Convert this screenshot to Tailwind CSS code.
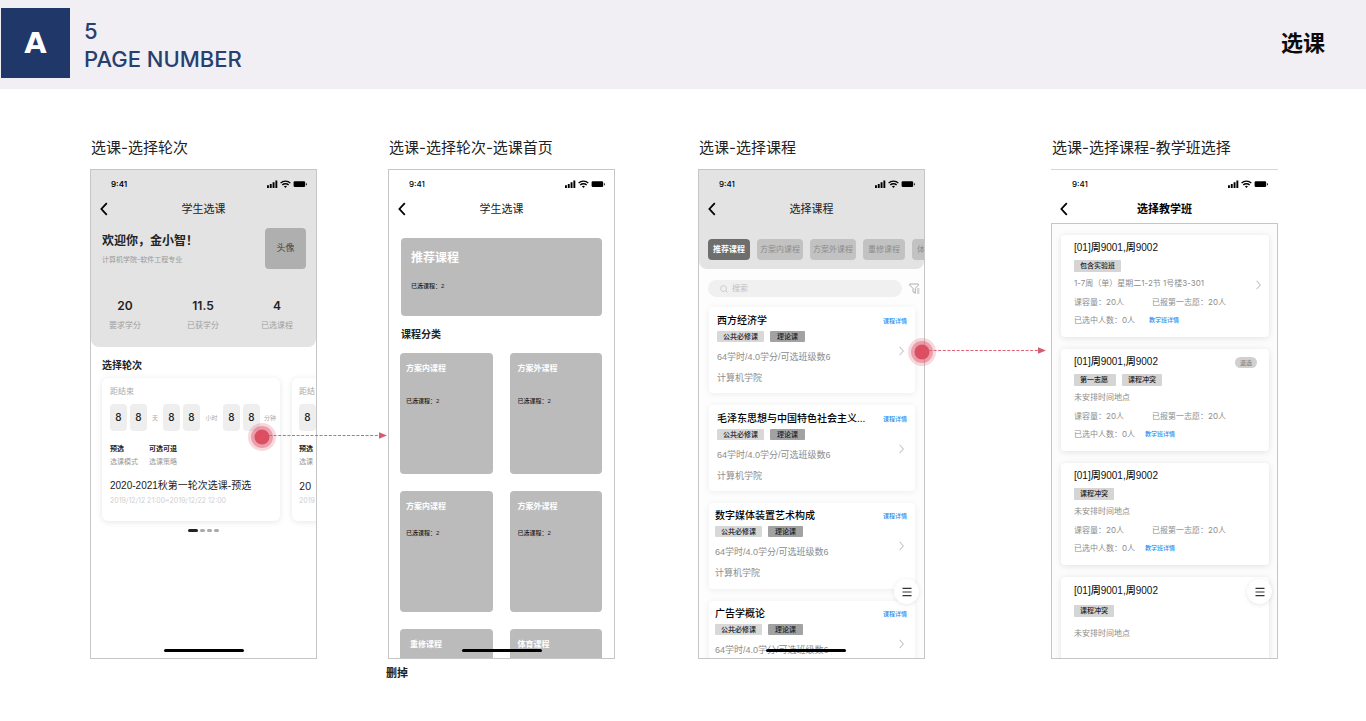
<!DOCTYPE html>
<html lang="zh-CN">
<head>
<meta charset="utf-8">
<meta name="viewport" content="width=device-width, initial-scale=1">
<title>选课</title>
<script src="https://cdn.jsdelivr.net/npm/@tailwindcss/browser@4"></script>
</head>
<body class="min-h-screen bg-white font-['Liberation_Sans','Noto_Sans_CJK_SC',sans-serif] text-[#222]">

<svg class="hidden" aria-hidden="true">
  <symbol id="status" viewBox="0 0 40 8">
    <path d="M0 5.2h1.9V8H0zM2.8 3.9h1.9V8H2.8zM5.6 2.2h1.9V8H5.6zM8.4.4h1.9V8H8.4z"/>
    <path d="M13.6 3.1C16 .4 20.9.4 23.3 3.1M15.3 5c1.6-1.7 4.7-1.7 6.3 0" fill="none" stroke="currentColor" stroke-width="1.4"/>
    <path d="M18.45 8l-1.5-1.7q1.5-1.2 3 0z"/>
    <rect x="26.6" y="1.3" width="11.6" height="5.8" rx="1.3"/>
    <path d="M39 3v2.4q.9-.3.9-1.2T39 3z"/>
  </symbol>
  <symbol id="back" viewBox="0 0 8 14"><path d="M6.8 1.2L1.4 7l5.4 5.8" fill="none" stroke="currentColor" stroke-width="1.8"/></symbol>
  <symbol id="next" viewBox="0 0 5 10"><path d="M.6.8L4.4 5 .6 9.2" fill="none" stroke="currentColor" stroke-width=".9"/></symbol>
  <symbol id="menu" viewBox="0 0 10 10"><path d="M.5 1.4h9M.5 5h9M.5 8.6h9" stroke="currentColor" stroke-width="1.2"/></symbol>
  <symbol id="search" viewBox="0 0 9 9"><circle cx="4" cy="4" r="3.3" fill="none" stroke="currentColor" stroke-width=".8"/><path d="M6.3 6.3L8.5 8.5" stroke="currentColor" stroke-width=".8"/></symbol>
  <symbol id="filter" viewBox="0 0 11 11"><path d="M.8 1h8.6v1.2L6.3 5.4v4.9L4 8.8V5.4L.8 2.2zM8 6h2.4M8 8h2.4M8 10h2.4" fill="none" stroke="currentColor" stroke-width=".8"/></symbol>
</svg>

<header class="flex h-[89px] items-start bg-[#f1eff3] pr-[41px] pl-px">
  <div class="mt-2 flex h-[70px] w-[69px] items-center justify-center bg-[#1f3869] pt-0.5 font-['DejaVu_Sans'] text-[29px] font-bold text-white">A</div>
  <div class="mt-[17px] ml-3.5 flex-1 font-[Inter] text-[22px] leading-7 font-medium text-[#26406f]">
    <p>5</p>
    <p>PAGE NUMBER</p>
  </div>
  <h1 class="mt-7 text-[22px] leading-8 font-bold text-[#0c0c0c]">选课</h1>
</header>

<main class="grid grid-cols-[90fr_227fr_71fr_227fr_83fr_227fr_126fr_227fr_88fr] pt-[47px]">

  <!-- Round selection -->
  <section class="relative col-start-2 min-w-0">
    <h2 class="h-[33px] pl-px font-[Inter,'Noto_Sans_CJK_SC',sans-serif] text-[15px] leading-6 whitespace-nowrap">选课-选择轮次</h2>
    <div class="relative h-[490px] overflow-hidden border border-[#c6c6c6] bg-white">
      <div class="rounded-b-lg bg-[#e3e3e3] pb-[15px]">
        <div class="flex h-7 items-center justify-between pr-[9px] pl-5 text-black">
          <span class="font-[Inter] text-[8px] font-semibold">9:41</span>
          <svg class="h-2 w-10 fill-current"><use href="#status"/></svg>
        </div>
        <nav class="grid h-[22px] grid-cols-[1fr_auto_1fr] items-center px-[9px]">
          <button type="button" aria-label="返回" class="w-3 text-black"><svg class="h-3.5 w-2"><use href="#back"/></svg></button>
          <h3 class="text-[11px] leading-4">学生选课</h3>
        </nav>
        <div class="mt-2 flex justify-between pr-2.5 pl-[11px]">
          <div class="pt-[3px]">
            <p class="text-[12px] leading-5 font-bold">欢迎你，金小智！</p>
            <p class="mt-[3px] font-[Inter,'Noto_Sans_CJK_SC',sans-serif] text-[7px] leading-3 text-[#999]">计算机学院-软件工程专业</p>
          </div>
          <div class="flex size-[41px] items-center justify-center rounded bg-[#afafaf] text-[9px] text-[#444]">头像</div>
        </div>
        <dl class="mt-[29px] flex justify-between pr-[23px] pl-[18px] text-center">
          <div class="flex flex-col-reverse gap-1.5"><dt class="text-[8px] leading-3 text-[#a0a0a0]">要求学分</dt><dd class="font-[Inter] text-[12px] leading-4 font-semibold">20</dd></div>
          <div class="flex flex-col-reverse gap-1.5 pl-1"><dt class="text-[8px] leading-3 text-[#a0a0a0]">已获学分</dt><dd class="font-[Inter] text-[12px] leading-4 font-semibold">11.5</dd></div>
          <div class="flex flex-col-reverse gap-1.5"><dt class="text-[8px] leading-3 text-[#a0a0a0]">已选课程</dt><dd class="font-[Inter] text-[12px] leading-4 font-semibold">4</dd></div>
        </dl>
      </div>
      <h4 class="mt-3 pl-[11px] text-[10px] leading-[14px] font-bold">选择轮次</h4>
      <div class="mt-[5px] ml-[11px] flex gap-3 whitespace-nowrap">
        <article class="h-[143px] w-[178px] shrink-0 rounded-md bg-white pt-2 pl-2 shadow-[0_1px_6px_rgba(0,0,0,0.1)]">
          <p class="text-[8px] leading-3 text-[#aaa]">距结束</p>
          <div class="mt-1.5 flex items-center gap-[3px] text-center font-[Inter,'Noto_Sans_CJK_SC',sans-serif] text-[10px] leading-[27px] font-medium">
            <span class="w-[17px] rounded-sm bg-[#eee]">8</span><span class="w-[17px] rounded-sm bg-[#eee]">8</span>
            <span class="w-2.5 text-[6px] font-normal text-[#aaa]">天</span>
            <span class="w-[17px] rounded-sm bg-[#eee]">8</span><span class="w-[17px] rounded-sm bg-[#eee]">8</span>
            <span class="w-[17px] text-[6px] font-normal text-[#aaa]">小时</span>
            <span class="w-[17px] rounded-sm bg-[#eee]">8</span><span class="w-[17px] rounded-sm bg-[#eee]">8</span>
            <span class="w-[14px] text-[6px] font-normal text-[#aaa]">分钟</span>
          </div>
          <dl class="mt-[13px] flex text-[7px] leading-[10px]">
            <div class="flex w-[39px] flex-col-reverse gap-[3px]"><dt class="text-[#999]">选课模式</dt><dd class="font-bold">预选</dd></div>
            <div class="flex flex-col-reverse gap-[3px]"><dt class="text-[#999]">选课策略</dt><dd class="font-bold">可选可退</dd></div>
          </dl>
          <p class="mt-3 text-[10px] leading-[14px]">2020-2021秋第一轮次选课-预选</p>
          <p class="mt-[3px] font-[Inter] text-[7px] leading-[10px] text-[#cfcfcf]">2019/12/12 21:00~2019/12/22 12:00</p>
        </article>
        <article class="h-[143px] w-[178px] shrink-0 rounded-md bg-white pt-2 pl-[7px] shadow-[0_1px_6px_rgba(0,0,0,0.1)]">
          <p class="w-4 overflow-hidden text-[8px] leading-3 text-[#aaa]">距结</p>
          <div class="mt-1.5 text-center font-[Inter] text-[10px] leading-[27px] font-medium"><span class="block w-[17px] rounded-sm bg-[#eee]">8</span></div>
          <dl class="mt-[13px] flex flex-col-reverse gap-[3px] text-[7px] leading-[10px]"><dt class="text-[#999]">选课</dt><dd class="font-bold">预选</dd></dl>
          <p class="mt-3 font-[Inter] text-[10px] leading-[14px]">20</p>
          <p class="mt-[3px] w-4 overflow-hidden font-[Inter] text-[7px] leading-[10px] text-[#cfcfcf]">2019</p>
        </article>
      </div>
      <div class="mt-2 flex justify-center gap-0.5">
        <i class="h-[3px] w-2.5 rounded-full bg-[#222]"></i><i class="h-[3px] w-[5px] rounded-full bg-[#aaa]"></i><i class="h-[3px] w-[5px] rounded-full bg-[#aaa]"></i><i class="h-[3px] w-[5px] rounded-full bg-[#aaa]"></i>
      </div>
      <div class="absolute bottom-1.5 left-[73px] h-[3px] w-20 rounded-full bg-black"></div>
    </div>
    <!-- Flow link to the course home -->
    <svg class="absolute top-[285px] left-[157px] z-10 h-[30px] w-[140px]" viewBox="0 0 140 30" fill="#dc4f63">
      <circle cx="15" cy="16" r="14" fill-opacity=".22"/><circle cx="15" cy="16" r="11" fill-opacity=".42"/><circle cx="15" cy="16" r="7.5"/>
      <path d="M22 14.5H132" stroke="#dc6475" stroke-dasharray="3 1.6"/><path d="M132 11.2l8 3.3-8 3.3z" fill="#d65d70"/>
    </svg>
  </section>

  <!-- Course home -->
  <section class="col-start-4 min-w-0">
    <h2 class="h-[33px] pl-px font-[Inter,'Noto_Sans_CJK_SC',sans-serif] text-[15px] leading-6 whitespace-nowrap">选课-选择轮次-选课首页</h2>
    <div class="relative h-[490px] overflow-hidden border border-[#c6c6c6] bg-white">
      <div class="flex h-7 items-center justify-between pr-[9px] pl-5 text-black">
        <span class="font-[Inter] text-[8px] font-medium">9:41</span>
        <svg class="h-2 w-10 fill-current"><use href="#status"/></svg>
      </div>
      <nav class="grid h-[22px] grid-cols-[1fr_auto_1fr] items-center px-[9px]">
        <button type="button" aria-label="返回" class="w-3 text-black"><svg class="h-3.5 w-2"><use href="#back"/></svg></button>
        <h3 class="text-[11px] leading-4">学生选课</h3>
      </nav>
      <article class="mx-3 mt-[18px] h-[78px] rounded bg-[#bbb] pt-3 pl-2.5">
        <h4 class="text-[12px] leading-4 font-bold text-white">推荐课程</h4>
        <p class="mt-[15px] text-[6px] leading-[10px] font-medium">已选课程：2</p>
      </article>
      <h4 class="mt-3 pl-3 text-[10px] leading-[14px] font-bold">课程分类</h4>
      <div class="mt-[11px] mr-3 ml-[11px] grid grid-cols-2 gap-[17px]">
        <article class="h-[121px] rounded bg-[#bbb] pt-2.5 pl-1.5"><h5 class="text-[8px] leading-3 font-bold text-white">方案内课程</h5><p class="mt-[21px] text-[6px] leading-[10px] font-medium">已选课程：2</p></article>
        <article class="h-[121px] rounded bg-[#bbb] pt-2.5 pl-2"><h5 class="text-[8px] leading-3 font-bold text-white">方案外课程</h5><p class="mt-[21px] text-[6px] leading-[10px] font-medium">已选课程：2</p></article>
        <article class="h-[121px] rounded bg-[#bbb] pt-2.5 pl-1.5"><h5 class="text-[8px] leading-3 font-bold text-white">方案内课程</h5><p class="mt-[15px] text-[6px] leading-[10px] font-medium">已选课程：2</p></article>
        <article class="h-[121px] rounded bg-[#bbb] pt-2.5 pl-2"><h5 class="text-[8px] leading-3 font-bold text-white">方案外课程</h5><p class="mt-[15px] text-[6px] leading-[10px] font-medium">已选课程：2</p></article>
        <article class="h-[121px] rounded bg-[#bbb] pt-2.5 pl-2.5"><h5 class="text-[8px] leading-3 font-bold text-white">重修课程</h5></article>
        <article class="h-[121px] rounded bg-[#bbb] pt-2.5 pl-2"><h5 class="text-[8px] leading-3 font-bold text-white">体育课程</h5></article>
      </div>
      <div class="absolute bottom-1.5 left-[73px] h-[3px] w-20 rounded-full bg-black"></div>
    </div>
    <p class="-ml-0.5 pt-1.5 text-[11px] leading-4 font-bold">删掉</p>
  </section>

  <!-- Course list -->
  <section class="relative col-start-6 min-w-0">
    <h2 class="h-[33px] pl-px font-[Inter,'Noto_Sans_CJK_SC',sans-serif] text-[15px] leading-6 whitespace-nowrap">选课-选择课程</h2>
    <div class="relative h-[490px] overflow-hidden border border-[#c6c6c6] bg-[#fdfdfd]">
      <div class="rounded-b-lg bg-[#e3e3e3] pb-[9px]">
        <div class="flex h-7 items-center justify-between pr-[9px] pl-5 text-black">
          <span class="font-[Inter] text-[8px] font-medium">9:41</span>
          <svg class="h-2 w-10 fill-current"><use href="#status"/></svg>
        </div>
        <nav class="grid h-[22px] grid-cols-[1fr_auto_1fr] items-center px-[9px]">
          <button type="button" aria-label="返回" class="w-3 text-black"><svg class="h-3.5 w-2"><use href="#back"/></svg></button>
          <h3 class="text-[11px] leading-4">选择课程</h3>
        </nav>
        <div class="mt-[19px] flex gap-[7px] overflow-hidden pl-[9px] text-[8px] leading-[21px] whitespace-nowrap text-[#8c8c8c]">
          <button type="button" class="w-[42px] shrink-0 rounded-sm bg-[#6e6e6e] font-bold text-white">推荐课程</button>
          <button type="button" class="w-[46px] shrink-0 rounded-sm bg-[#c2c2c2]">方案内课程</button>
          <button type="button" class="w-[46px] shrink-0 rounded-sm bg-[#c2c2c2]">方案外课程</button>
          <button type="button" class="w-[42px] shrink-0 rounded-sm bg-[#c2c2c2]">重修课程</button>
          <button type="button" class="w-[42px] shrink-0 rounded-sm bg-[#c2c2c2]">体育课程</button>
        </div>
      </div>
      <div class="mt-[11px] flex items-center gap-[7px] pr-1 pl-[9px]">
        <label class="flex h-[17px] min-w-0 flex-1 items-center gap-1 rounded-full bg-[#f0f0f0] pl-3 text-[#c0c0c0]">
          <svg class="size-2 shrink-0"><use href="#search"/></svg>
          <input type="search" aria-label="搜索" placeholder="搜索" class="w-full min-w-0 bg-transparent text-[8px] leading-3 outline-none placeholder:text-[#c0c0c0]">
        </label>
        <button type="button" aria-label="筛选" class="text-[#999]"><svg class="block size-[11px]"><use href="#filter"/></svg></button>
      </div>
      <div class="mt-2.5 mr-[9px] ml-2.5 flex flex-col gap-3 whitespace-nowrap">
        <article class="h-[86px] shrink-0 rounded bg-white pt-[7px] pr-2 pl-2 shadow-[0_1px_6px_rgba(0,0,0,0.07)]">
          <div class="flex justify-between leading-[14px]"><h4 class="text-[10px] font-medium text-black">西方经济学</h4><a href="#" class="text-[6px] font-medium text-[#2c8df0]">课程详情</a></div>
          <div class="flex justify-between pr-[3px]">
            <div>
              <p class="mt-[3px] flex gap-1.5 text-[7px] leading-[11px] font-medium"><span class="rounded-[1px] bg-[#d8d8d8] px-1.5">公共必修课</span><span class="rounded-[1px] bg-[#a2a2a2] px-[7px]">理论课</span></p>
              <p class="mt-[9px] text-[9px] leading-3 text-[#8c8c8c]">64学时/4.0学分/可选班级数6</p>
              <p class="mt-[9px] text-[9px] leading-3 text-[#8c8c8c]">计算机学院</p>
            </div>
            <svg class="mt-[18px] h-2.5 w-[5px] text-[#aaa]"><use href="#next"/></svg>
          </div>
        </article>
        <article class="h-[86px] shrink-0 rounded bg-white pt-[7px] pr-2 pl-2 shadow-[0_1px_6px_rgba(0,0,0,0.07)]">
          <div class="flex justify-between leading-[14px]"><h4 class="text-[10px] font-medium text-black">毛泽东思想与中国特色社会主义...</h4><a href="#" class="text-[6px] font-medium text-[#2c8df0]">课程详情</a></div>
          <div class="flex justify-between pr-[3px]">
            <div>
              <p class="mt-[3px] flex gap-1.5 text-[7px] leading-[11px] font-medium"><span class="rounded-[1px] bg-[#d8d8d8] px-1.5">公共必修课</span><span class="rounded-[1px] bg-[#a2a2a2] px-[7px]">理论课</span></p>
              <p class="mt-[9px] text-[9px] leading-3 text-[#8c8c8c]">64学时/4.0学分/可选班级数6</p>
              <p class="mt-[9px] text-[9px] leading-3 text-[#8c8c8c]">计算机学院</p>
            </div>
            <svg class="mt-[18px] h-2.5 w-[5px] text-[#aaa]"><use href="#next"/></svg>
          </div>
        </article>
        <article class="h-[86px] shrink-0 rounded bg-white pt-1.5 pr-2 pl-1.5 shadow-[0_1px_6px_rgba(0,0,0,0.07)]">
          <div class="flex justify-between leading-[14px]"><h4 class="text-[10px] font-medium text-black">数字媒体装置艺术构成</h4><a href="#" class="text-[6px] font-medium text-[#2c8df0]">课程详情</a></div>
          <div class="flex justify-between pr-[3px]">
            <div>
              <p class="mt-[3px] flex gap-1.5 text-[7px] leading-[11px] font-medium"><span class="rounded-[1px] bg-[#d8d8d8] px-1.5">公共必修课</span><span class="rounded-[1px] bg-[#a2a2a2] px-[7px]">理论课</span></p>
              <p class="mt-[9px] text-[9px] leading-3 text-[#8c8c8c]">64学时/4.0学分/可选班级数6</p>
              <p class="mt-[9px] text-[9px] leading-3 text-[#8c8c8c]">计算机学院</p>
            </div>
            <svg class="mt-[18px] h-2.5 w-[5px] text-[#aaa]"><use href="#next"/></svg>
          </div>
        </article>
        <article class="h-[86px] shrink-0 rounded bg-white pt-1.5 pr-2 pl-1.5 shadow-[0_1px_6px_rgba(0,0,0,0.07)]">
          <div class="flex justify-between leading-[14px]"><h4 class="text-[10px] font-medium text-black">广告学概论</h4><a href="#" class="text-[6px] font-medium text-[#2c8df0]">课程详情</a></div>
          <div class="flex justify-between pr-[3px]">
            <div>
              <p class="mt-[3px] flex gap-1.5 text-[7px] leading-[11px] font-medium"><span class="rounded-[1px] bg-[#d8d8d8] px-1.5">公共必修课</span><span class="rounded-[1px] bg-[#a2a2a2] px-[7px]">理论课</span></p>
              <p class="mt-[9px] text-[9px] leading-3 text-[#8c8c8c]">64学时/4.0学分/可选班级数6</p>
            </div>
            <svg class="mt-[18px] h-2.5 w-[5px] text-[#aaa]"><use href="#next"/></svg>
          </div>
        </article>
      </div>
      <button type="button" aria-label="菜单" class="absolute right-[5px] bottom-[54px] flex size-[25px] items-center justify-center rounded-full bg-white text-[#333] shadow-[0_1px_5px_rgba(0,0,0,0.1)]"><svg class="size-2.5"><use href="#menu"/></svg></button>
      <div class="absolute bottom-1.5 left-[67px] h-[3px] w-20 rounded-full bg-black"></div>
    </div>
    <!-- Flow link to the class list -->
    <svg class="absolute top-[200px] left-[208px] z-10 h-[30px] w-[140px]" viewBox="0 0 140 30" fill="#dc4f63">
      <circle cx="16" cy="16" r="14" fill-opacity=".22"/><circle cx="16" cy="16" r="11" fill-opacity=".42"/><circle cx="16" cy="16" r="7.5"/>
      <path d="M23 14.5H132" stroke="#dc6475" stroke-dasharray="3 1.6"/><path d="M132 11.2l8 3.3-8 3.3z" fill="#d65d70"/>
    </svg>
  </section>

  <!-- Class list -->
  <section class="col-start-8 min-w-0">
    <h2 class="h-[33px] pl-px font-[Inter,'Noto_Sans_CJK_SC',sans-serif] text-[15px] leading-6 whitespace-nowrap">选课-选择课程-教学班选择</h2>
    <div class="h-[54px] border-t border-[#d6d6d6] bg-white">
      <div class="flex h-7 items-center justify-between pr-2.5 pl-[21px] text-black">
        <span class="font-[Inter] text-[8px] font-medium">9:41</span>
        <svg class="h-2 w-10 fill-current"><use href="#status"/></svg>
      </div>
      <nav class="grid h-[22px] grid-cols-[1fr_auto_1fr] items-center px-[9px]">
        <button type="button" aria-label="返回" class="w-3 text-black"><svg class="h-3.5 w-2"><use href="#back"/></svg></button>
        <h3 class="text-[11px] leading-4 font-bold text-black">选择教学班</h3>
      </nav>
    </div>
    <div class="relative h-[436px] overflow-hidden border border-[#c6c6c6] bg-[#fcfcfc] pt-[11px] pr-2 pl-[9px] font-[Inter,'Noto_Sans_CJK_SC',sans-serif] text-[8px] leading-3 whitespace-nowrap text-[#8c8c8c]">
      <div class="flex flex-col gap-3">
        <article class="h-[102px] shrink-0 rounded bg-white pt-1.5 pr-2 pl-[13px] shadow-[0_1px_6px_rgba(0,0,0,0.11)]">
          <h4 class="font-['Liberation_Sans','Noto_Sans_CJK_SC',sans-serif] text-[10px] leading-[14px] font-medium text-[#111]">[01]周9001,周9002</h4>
          <p class="mt-[5px] flex gap-1.5 text-[7px] font-medium text-[#222]"><span class="rounded-[1px] bg-[#d5d5d5] px-1.5">包含实验班</span></p>
          <p class="mt-[5px] flex justify-between"><span>1-7周（单）星期二1-2节 1号楼3-301</span><svg class="mt-[3px] h-2.5 w-[5px] text-[#aaa]"><use href="#next"/></svg></p>
          <p class="mt-1.5 flex"><span class="w-[78px]">课容量：20人</span><span>已报第一志愿：20人</span></p>
          <p class="mt-1.5 flex gap-3.5"><span>已选中人数：0人</span><a href="#" class="text-[6px] font-medium text-[#2c8df0]">教学班详情</a></p>
        </article>
        <article class="h-[102px] shrink-0 rounded bg-white pt-1.5 pr-3 pl-[13px] shadow-[0_1px_6px_rgba(0,0,0,0.11)]">
          <div class="flex items-center justify-between"><h4 class="font-['Liberation_Sans','Noto_Sans_CJK_SC',sans-serif] text-[10px] leading-[14px] font-medium text-[#111]">[01]周9001,周9002</h4><span class="rounded-full bg-[#d0d0d0] px-[5px] text-[6px] leading-[11px] text-[#777]">退选</span></div>
          <p class="mt-[5px] flex gap-1.5 text-[7px] font-medium text-[#222]"><span class="rounded-[1px] bg-[#d5d5d5] pr-2 pl-1.5">第一志愿</span><span class="rounded-[1px] bg-[#d5d5d5] px-1.5">课程冲突</span></p>
          <p class="mt-[5px]">未安排时间地点</p>
          <p class="mt-[7px] flex"><span class="w-[78px]">课容量：20人</span><span>已报第一志愿：20人</span></p>
          <p class="mt-1.5 flex gap-2.5"><span>已选中人数：0人</span><a href="#" class="text-[6px] font-medium text-[#2c8df0]">教学班详情</a></p>
        </article>
        <article class="h-[102px] shrink-0 rounded bg-white pt-1.5 pr-3 pl-[13px] shadow-[0_1px_6px_rgba(0,0,0,0.11)]">
          <h4 class="font-['Liberation_Sans','Noto_Sans_CJK_SC',sans-serif] text-[10px] leading-[14px] font-medium text-[#111]">[01]周9001,周9002</h4>
          <p class="mt-[5px] flex gap-1.5 text-[7px] font-medium text-[#222]"><span class="rounded-[1px] bg-[#d5d5d5] px-1.5">课程冲突</span></p>
          <p class="mt-[5px]">未安排时间地点</p>
          <p class="mt-[7px] flex"><span class="w-[78px]">课容量：20人</span><span>已报第一志愿：20人</span></p>
          <p class="mt-1.5 flex gap-2.5"><span>已选中人数：0人</span><a href="#" class="text-[6px] font-medium text-[#2c8df0]">教学班详情</a></p>
        </article>
        <article class="h-[102px] shrink-0 rounded bg-white pt-[7px] pr-3 pl-[13px] shadow-[0_1px_6px_rgba(0,0,0,0.11)]">
          <h4 class="font-['Liberation_Sans','Noto_Sans_CJK_SC',sans-serif] text-[10px] leading-[14px] font-medium text-[#111]">[01]周9001,周9002</h4>
          <p class="mt-[7px] flex gap-1.5 text-[7px] font-medium text-[#222]"><span class="rounded-[1px] bg-[#d5d5d5] px-1.5">课程冲突</span></p>
          <p class="mt-2.5">未安排时间地点</p>
        </article>
      </div>
      <button type="button" aria-label="菜单" class="absolute right-[5px] bottom-[54px] flex size-[25px] items-center justify-center rounded-full bg-white text-[#333] shadow-[0_1px_5px_rgba(0,0,0,0.1)]"><svg class="size-2.5"><use href="#menu"/></svg></button>
    </div>
  </section>
</main>
</body>
</html>
